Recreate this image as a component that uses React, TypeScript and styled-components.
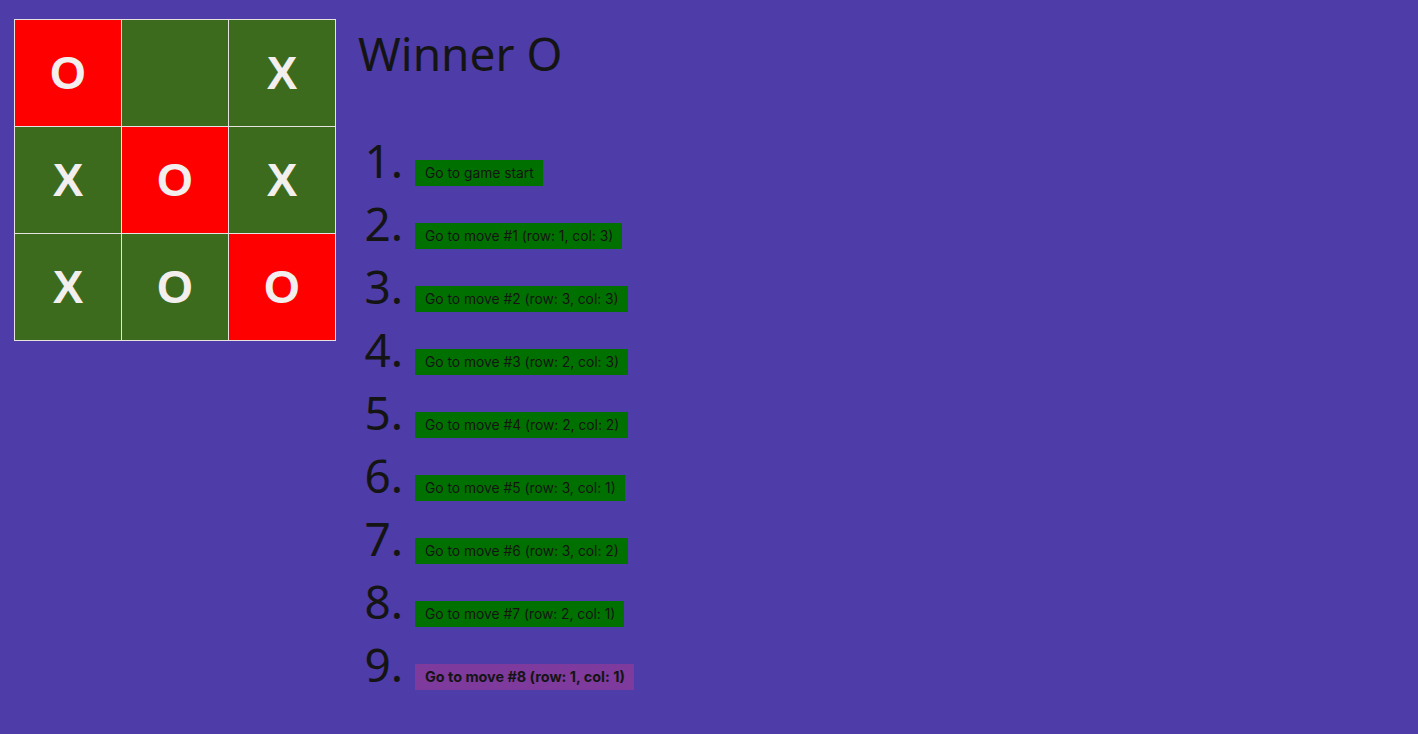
import React from "react";
import styled, { createGlobalStyle } from "styled-components";

const Global = createGlobalStyle`
  html, body { margin: 0; padding: 0; }
  body {
    background: #4e3ca8;
    min-height: 734px;
    font-family: "Comic Sans MS", "Noto Sans", sans-serif;
  }
`;

const Game = styled.div`
  display: flex;
  align-items: flex-start;
  padding: 19px 14px;
  gap: 22px;
`;

const Board = styled.div`
  display: grid;
  grid-template-columns: repeat(3, 106px);
  grid-auto-rows: 106px;
  gap: 1px;
  padding: 1px;
  background: #e6e2e2;
`;

const Square = styled.button<{ $win: boolean }>`
  border: none;
  margin: 0;
  padding: 0;
  background: ${(p) => (p.$win ? "#ff0000" : "#3d6b1e")};
  color: #f3efef;
  font-family: "Liberation Sans", Arial, sans-serif;
  font-weight: 700;
  font-size: 46px;
  display: flex;
  align-items: center;
  justify-content: center;
  cursor: pointer;
`;

const Info = styled.div`
  display: flex;
  flex-direction: column;
`;

const Status = styled.div`
  font-size: 46px;
  line-height: 68px;
  color: #141414;
  margin-top: 0;
`;

const Moves = styled.ol`
  margin: 42px 0 0;
  padding-left: 57px;
  font-size: 46px;
  color: #141414;
`;

const Move = styled.li`
  line-height: 63px;
  &::marker {
    font-size: 46px;
  }
`;

const MoveButton = styled.button<{ $current: boolean }>`
  border: none;
  margin: 0;
  vertical-align: baseline;
  font-family: Inter, "Liberation Sans", sans-serif;
  font-size: ${(p) => (p.$current ? "14.4px" : "13.8px")};
  line-height: 16px;
  padding: 5px 9px 5px 10px;
  color: #141414;
  font-weight: ${(p) => (p.$current ? 700 : 400)};
  background: ${(p) => (p.$current ? "#7e3a9c" : "#007100")};
  cursor: pointer;
`;

const squares = ["O", "", "X", "X", "O", "X", "X", "O", "O"];
const winLine = [0, 4, 8];

const moves = [
  "Go to game start",
  "Go to move #1 (row: 1, col: 3)",
  "Go to move #2 (row: 3, col: 3)",
  "Go to move #3 (row: 2, col: 3)",
  "Go to move #4 (row: 2, col: 2)",
  "Go to move #5 (row: 3, col: 1)",
  "Go to move #6 (row: 3, col: 2)",
  "Go to move #7 (row: 2, col: 1)",
  "Go to move #8 (row: 1, col: 1)",
];

export default function App() {
  return (
    <>
      <Global />
      <Game>
        <Board>
          {squares.map((s, i) => (
            <Square key={i} $win={winLine.includes(i)}>
              {s}
            </Square>
          ))}
        </Board>
        <Info>
          <Status>Winner O</Status>
          <Moves>
            {moves.map((m, i) => (
              <Move key={i}>
                <MoveButton $current={i === moves.length - 1}>{m}</MoveButton>
              </Move>
            ))}
          </Moves>
        </Info>
      </Game>
    </>
  );
}
